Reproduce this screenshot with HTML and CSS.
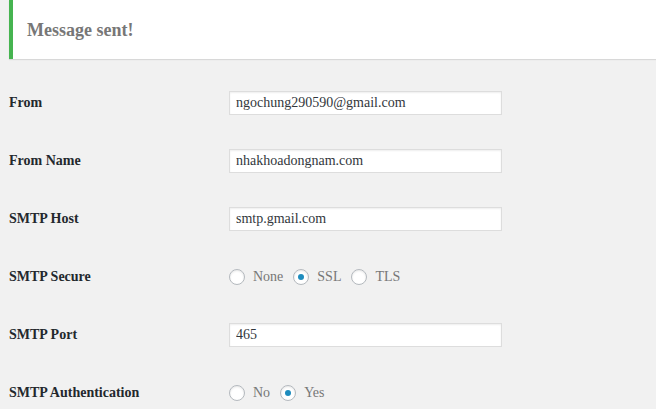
FILE: index.html
```html
<!DOCTYPE html>
<html lang="en">
<head>
  <meta charset="UTF-8" />
  <title>SMTP Settings</title>
  <link rel="stylesheet" href="styles.css">
</head>
<body>
  <div class="wrap">
    <div class="notice">
      <h2 class="notice-title">Message sent!</h2>
    </div>

    <form class="settings">
      <div class="field-row">
        <label class="field-label" for="from">From</label>
        <input class="text-input" id="from" type="text" value="ngochung290590@gmail.com">
      </div>
      <div class="field-row">
        <label class="field-label" for="from-name">From Name</label>
        <input class="text-input" id="from-name" type="text" value="nhakhoadongnam.com">
      </div>
      <div class="field-row">
        <label class="field-label" for="host">SMTP Host</label>
        <input class="text-input" id="host" type="text" value="smtp.gmail.com">
      </div>
      <div class="field-row">
        <span class="field-label">SMTP Secure</span>
        <div class="radio-group">
          <label class="radio-option"><input type="radio" name="secure"> None</label>
          <label class="radio-option"><input type="radio" name="secure" checked> SSL</label>
          <label class="radio-option"><input type="radio" name="secure"> TLS</label>
        </div>
      </div>
      <div class="field-row">
        <label class="field-label" for="port">SMTP Port</label>
        <input class="text-input" id="port" type="text" value="465">
      </div>
      <div class="field-row">
        <span class="field-label">SMTP Authentication</span>
        <div class="radio-group">
          <label class="radio-option"><input type="radio" name="auth"> No</label>
          <label class="radio-option"><input type="radio" name="auth" checked> Yes</label>
        </div>
      </div>
    </form>
  </div>
</body>
</html>
```

FILE: styles.css
```css
* {
  margin: 0;
  padding: 0;
  box-sizing: border-box;
}
body {
  font-family: 'Liberation Serif', 'Times New Roman', serif;
  font-size: 14px;
  background-color: #f1f1f1;
  color: #23282d;
  overflow: hidden;
}
.wrap {
  padding-left: 9px;
}
/* Notice */
.notice {
  height: 59px;
  background-color: #fff;
  border-left: 4px solid #46b450;
  box-shadow: 0 1px 1px 0 rgba(0, 0, 0, 0.1);
  padding-left: 14px;
  display: flex;
  align-items: center;
}
.notice-title {
  font-size: 18px;
  font-weight: 700;
  color: #777;
  line-height: 1;
  margin-top: 1px;
}
/* Form rows */
.settings {
  margin-top: 15px;
}
.field-row {
  display: flex;
  align-items: center;
  height: 58px;
}
.field-label {
  width: 220px;
  flex-shrink: 0;
  font-weight: 700;
  color: #23282d;
  line-height: 1.3;
}
.text-input {
  width: 273px;
  height: 24px;
  border: 1px solid #ddd;
  background-color: #fff;
  box-shadow: inset 0 1px 2px rgba(0, 0, 0, 0.07);
  padding: 0 6px;
  font-family: inherit;
  font-size: 14px;
  color: #32373c;
  outline: none;
}
/* Radios */
.radio-group {
  display: flex;
  align-items: center;
  gap: 10px;
}
.radio-option {
  display: flex;
  align-items: center;
  color: #777;
  line-height: 1;
}
.radio-option input {
  appearance: none;
  -webkit-appearance: none;
  width: 16px;
  height: 16px;
  margin-right: 8px;
  border: 1px solid #b4b9be;
  border-radius: 50%;
  background-color: #fff;
  box-shadow: inset 0 1px 2px rgba(0, 0, 0, 0.1);
  display: flex;
  align-items: center;
  justify-content: center;
}
.radio-option input:checked::before {
  content: '';
  width: 6px;
  height: 6px;
  border-radius: 50%;
  background-color: #1e8cbe;
}
```
